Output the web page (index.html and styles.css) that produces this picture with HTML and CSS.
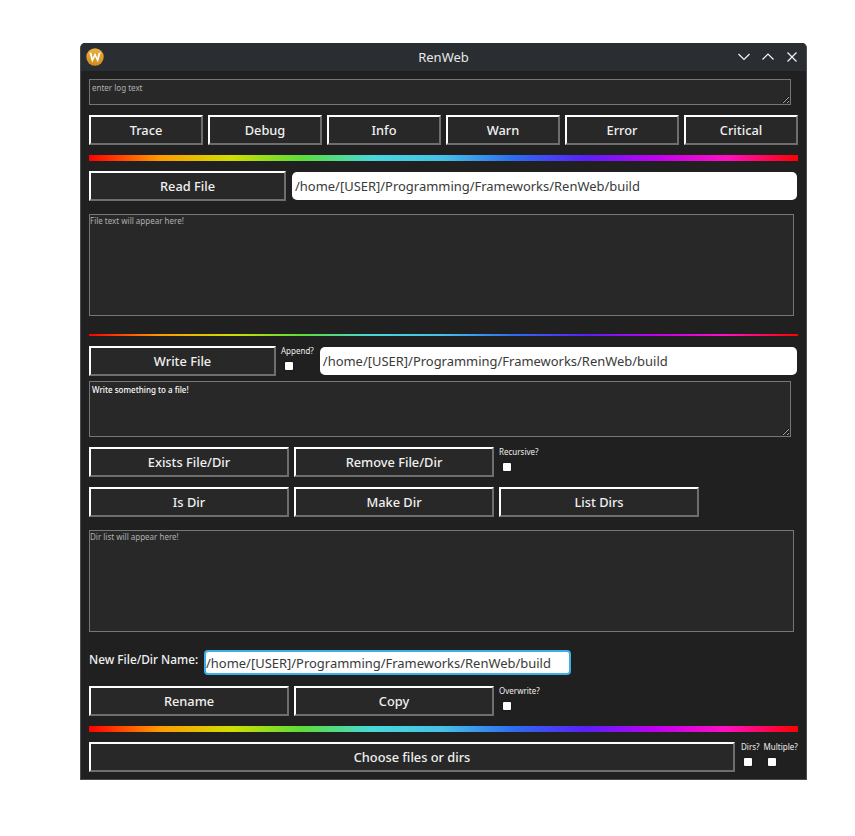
FILE: index.html
```html
<!DOCTYPE html>
<html lang="en">
<head>
<meta charset="utf-8">
<title>RenWeb</title>
<link rel="stylesheet" href="styles.css">
</head>
<body>
<div class="window">
  <header class="titlebar">
    <svg class="logo" width="18" height="18" viewBox="0 0 18 18">
      <defs><linearGradient id="lg" x1="0" y1="0" x2="0" y2="1"><stop offset="0" stop-color="#eab03e"/><stop offset="1" stop-color="#d18c1e"/></linearGradient></defs>
      <circle cx="9" cy="9" r="8.7" fill="url(#lg)"/>
      <path d="M3.2 4 L6.2 14.6 L9 8.6 L11.8 14.6 L14.8 4 L12.4 5.2 L11.4 10 L9 4.8 L6.6 10 L5.6 5.2 Z" fill="#fff"/>
    </svg>
    <span class="title">RenWeb</span>
    <div class="winctl">
      <svg width="12" height="12" viewBox="0 0 12 12"><path d="M0.5 3 L6 8.5 L11.5 3" fill="none" stroke="#f4f4f4" stroke-width="1.2"/></svg>
      <svg width="12" height="12" viewBox="0 0 12 12"><path d="M0.5 8.5 L6 3 L11.5 8.5" fill="none" stroke="#f4f4f4" stroke-width="1.2"/></svg>
      <svg width="12" height="12" viewBox="0 0 12 12"><path d="M1.5 1.5 L10.5 10.5 M10.5 1.5 L1.5 10.5" fill="none" stroke="#f4f4f4" stroke-width="1.2"/></svg>
    </div>
  </header>
  <main class="content">
    <textarea class="area area-log" placeholder="enter log text"></textarea>
    <div class="row row-log">
      <button class="btn btn-log">Trace</button>
      <button class="btn btn-log">Debug</button>
      <button class="btn btn-log">Info</button>
      <button class="btn btn-log">Warn</button>
      <button class="btn btn-log">Error</button>
      <button class="btn btn-log">Critical</button>
    </div>
    <div class="rainbow rainbow-thick rb-1"></div>
    <div class="row row-read">
      <button class="btn btn-read">Read File</button>
      <input class="path path-read" type="text" value="/home/[USER]/Programming/Frameworks/RenWeb/build">
    </div>
    <textarea class="area area-out area-file" placeholder="File text will appear here!" readonly></textarea>
    <div class="rainbow rainbow-thin"></div>
    <div class="row row-write">
      <button class="btn btn-write">Write File</button>
      <label class="check check-append"><span>Append?</span><input type="checkbox"></label>
      <input class="path path-write" type="text" value="/home/[USER]/Programming/Frameworks/RenWeb/build">
    </div>
    <textarea class="area area-write">Write something to a file!</textarea>
    <div class="row row-ops row-exists">
      <button class="btn btn-op">Exists File/Dir</button>
      <button class="btn btn-op">Remove File/Dir</button>
      <label class="check"><span>Recursive?</span><input type="checkbox"></label>
    </div>
    <div class="row row-ops row-dirs">
      <button class="btn btn-op">Is Dir</button>
      <button class="btn btn-op">Make Dir</button>
      <button class="btn btn-op">List Dirs</button>
    </div>
    <textarea class="area area-out area-dirs" placeholder="Dir list will appear here!" readonly></textarea>
    <div class="row row-name">
      <label class="name-label" for="newname">New File/Dir Name:</label>
      <input class="path path-name" id="newname" type="text" value="/home/[USER]/Programming/Frameworks/RenWeb/build">
    </div>
    <div class="row row-ops row-rename">
      <button class="btn btn-op">Rename</button>
      <button class="btn btn-op">Copy</button>
      <label class="check"><span>Overwrite?</span><input type="checkbox"></label>
    </div>
    <div class="rainbow rainbow-thick rb-2"></div>
    <div class="row row-choose">
      <button class="btn btn-choose">Choose files or dirs</button>
      <label class="check check-dirs"><span>Dirs?</span><input type="checkbox"></label>
      <label class="check"><span>Multiple?</span><input type="checkbox"></label>
    </div>
  </main>
</div>
</body>
</html>
```
FILE: styles.css
```css
* { box-sizing: border-box; }
html, body { margin: 0; padding: 0; background: #fff; }
body { padding: 43px 0 0 80px; font-family: "Noto Sans", sans-serif; }
.window {
  width: 727px;
  height: 737px;
  background: #202020;
  border: 1px solid #4a4d50;
  border-top: 0;
  border-radius: 5px 5px 0 0;
  overflow: hidden;
}
.titlebar {
  height: 28px;
  background: #2a2e32;
  display: flex;
  align-items: center;
  padding: 0 8px 0 5px;
  position: relative;
  color: #fcfcfc;
}
.logo { display: block; }
.title {
  position: absolute;
  left: 0; right: 0;
  text-align: center;
  font-size: 13px;
  color: #e8e8e8;
}
.winctl { margin-left: auto; display: flex; gap: 12px; position: relative; }
.winctl svg { display: block; }
.content {
  padding: 8px 0 0 8px;
  display: flex;
  flex-direction: column;
  align-items: flex-start;
}
.row { display: flex; width: 709px; }
.btn {
  height: 30px;
  padding: 0;
  background: #282828;
  color: #f0f0f0;
  font: 500 12.8px "Noto Sans", sans-serif;
  border: 2px solid;
  border-color: #fff #6e6e6e #6e6e6e #fff;
  flex: none;
}
.area {
  display: block;
  background: #282828;
  border: 1px solid #767676;
  border-radius: 0;
  color: #fff;
  font: 8px "Noto Sans", sans-serif;
  padding: 2px;
  margin: 0;
  outline: 0;
}
.area::placeholder { color: #b0b0b0; opacity: 1; }
.area-log { width: 702px; height: 26px; }
.row-log { gap: 5px; margin-top: 10px; }
.btn-log { width: 114px; }
.rainbow {
  width: 709px;
  background: linear-gradient(to right, #f00 0%, #ff9a00 10%, #d0de00 20%, #5cdc3a 30%, #48d8d8 40%, #46c0e8 50%, #2d6cf0 60%, #5a20f8 70%, #c000f0 80%, #ff10c0 90%, #f00 100%);
}
.rainbow-thick { height: 6px; }
.rainbow-thin { height: 2px; margin-top: 18px; }
.rb-1 { margin-top: 10px; }
.rb-2 { margin-top: 10px; }
.row-read { margin-top: 10px; align-items: center; }
.btn-read { width: 197px; }
.path {
  height: 28px;
  background: #fff;
  color: #3a3a3a;
  border: 0;
  border-radius: 5px;
  font: 12.96px "Noto Sans", sans-serif;
  padding: 0 3px;
  outline: 0;
  margin: 0;
}
.path-read { width: 505px; margin-left: 6px; }
.area-out { width: 705px; height: 102px; padding: 0; resize: none; }
.area-file { margin-top: 13px; }
.row-write { margin-top: 10px; align-items: flex-start; }
.btn-write { width: 187px; }
.check {
  display: flex;
  flex-direction: column;
  align-items: flex-start;
  font-size: 8px;
  line-height: 10px;
  color: #eee;
  flex: none;
}
.check input {
  appearance: none;
  width: 8px;
  height: 8px;
  margin: 6px 0 0 4px;
  background: #fff;
  border: 0;
  border-radius: 1px;
  box-shadow: 0 0 2px #111;
  display: block;
}
.check-append { margin-left: 5px; }
.path-write { width: 477px; margin: 1px 0 0 6px; }
.area-write { width: 702px; height: 56px; margin-top: 5px; font-weight: 500; }
.row-ops { gap: 5px; margin-top: 10px; }
.btn-op { width: 200px; }
.area-dirs { margin-top: 13px; }
.row-name { margin-top: 18px; align-items: center; }
.name-label { width: 115px; font-size: 11.8px; font-weight: 500; color: #f0f0f0; white-space: nowrap; position: relative; top: -4px; }
.path-name {
  width: 367px;
  height: 25px;
  border: 2px solid #3daee9;
  border-radius: 4px;
  padding: 0;
}
.row-rename { margin-top: 11px; }
.row-choose { margin-top: 10px; gap: 5px; }
.btn-choose { width: 646px; margin-right: 1px; }
.check-dirs { margin-right: -1px; }
.check-dirs input { margin-left: 3px; }
```
